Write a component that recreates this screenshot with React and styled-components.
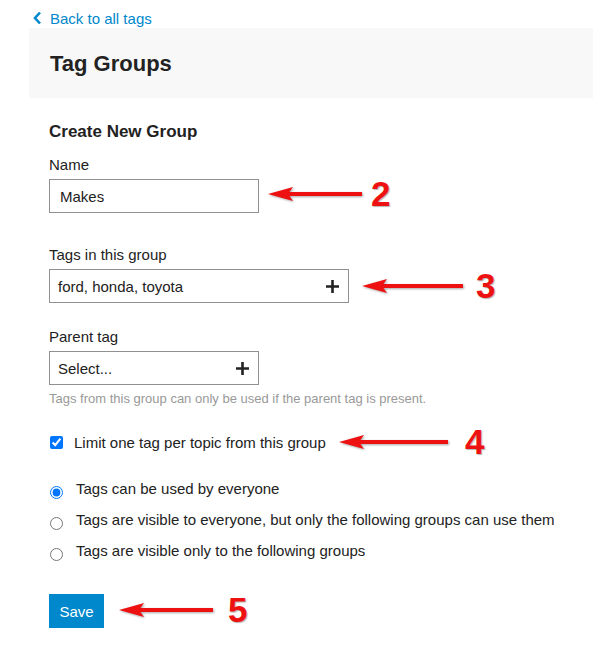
import React, { useState } from "react";
import styled, { createGlobalStyle } from "styled-components";

const GlobalStyle = createGlobalStyle`
  body {
    margin: 0;
    font-family: "Liberation Sans", Arial, sans-serif;
    color: #222;
    background: #fff;
  }
`;

const Page = styled.div`
  position: relative;
  width: 593px;
  height: 646px;
  overflow: hidden;
  padding-left: 29px;
  box-sizing: border-box;
`;

const BackLink = styled.a`
  display: flex;
  align-items: center;
  gap: 8px;
  height: 20px;
  margin: 8px 0 0 4px;
  font-size: 15px;
  color: #0088cc;
  text-decoration: none;
  cursor: pointer;
`;

const Header = styled.div`
  display: flex;
  align-items: center;
  height: 70px;
  padding-left: 21px;
  background: #f8f8f8;
`;

const Title = styled.h1`
  margin: 2px 0 0;
  font-size: 22px;
  font-weight: bold;
  color: #222;
`;

const Form = styled.form`
  display: flex;
  flex-direction: column;
  padding-left: 20px;
`;

const SectionTitle = styled.h2`
  margin: 24px 0 13px;
  font-size: 17px;
  line-height: 20px;
  font-weight: bold;
`;

const Field = styled.div`
  display: flex;
  flex-direction: column;
  align-items: flex-start;
  margin-bottom: ${(p) => p.$gap || 0}px;
`;

const Label = styled.label`
  font-size: 15px;
  line-height: 20px;
  margin-bottom: 4px;
`;

const Box = styled.div`
  display: flex;
  align-items: center;
  justify-content: space-between;
  box-sizing: border-box;
  width: ${(p) => p.$width}px;
  height: 34px;
  padding: 0 9px 0 ${(p) => p.$pad || 8}px;
  border: 1px solid #919191;
  background: #fff;
  font-size: 15px;
`;

const TextInput = styled.input`
  box-sizing: border-box;
  width: ${(p) => p.$width}px;
  height: 34px;
  padding: 0 10px;
  border: 1px solid #919191;
  font: 15px "Liberation Sans", Arial, sans-serif;
  color: #222;
  outline: none;
`;

const Help = styled.div`
  margin-top: 6px;
  font-size: 13px;
  line-height: 16px;
  color: #999;
`;

const CheckRow = styled.label`
  display: flex;
  align-items: center;
  height: 20px;
  margin: 25px 0 27px;
  font-size: 15px;

  input {
    width: 13px;
    height: 13px;
    margin: 0 11px 0 1px;
    accent-color: #0075ff;
  }
`;

const RadioGroup = styled.div`
  display: flex;
  flex-direction: column;
  gap: 10px;
`;

const RadioRow = styled.label`
  display: flex;
  align-items: flex-start;
  height: 21px;
  font-size: 15px;
  line-height: 20px;

  input {
    width: 13px;
    height: 13px;
    margin: 7px 13px 0 1px;
    accent-color: #0075ff;
  }
`;

const SaveButton = styled.button`
  align-self: flex-start;
  margin-top: 32px;
  width: 55px;
  height: 34px;
  border: none;
  background: #0088cc;
  color: #fff;
  font: 15px "Liberation Sans", Arial, sans-serif;
  cursor: pointer;
`;

const Callout = styled.div`
  position: absolute;
  top: ${(p) => p.$y - 16}px;
  left: ${(p) => p.$x}px;
  display: flex;
  align-items: center;
  height: 32px;
  pointer-events: none;
`;

const CalloutNumber = styled.span`
  margin-left: ${(p) => p.$gap}px;
  font-size: 35px;
  font-weight: bold;
  line-height: 32px;
  color: #ee1111;
  text-shadow: 1px 1px 1px rgba(0, 0, 0, 0.3);
`;

const Plus = () => (
  <svg width="13" height="13" viewBox="0 0 13 13">
    <path d="M6.5 0v13M0 6.5h13" stroke="#222" strokeWidth="2.6" />
  </svg>
);

const Chevron = () => (
  <svg width="9" height="14" viewBox="0 0 9 14">
    <path d="M7 1.5L2 7l5 5.5" fill="none" stroke="#0088cc" strokeWidth="2.6" />
  </svg>
);

const Arrow = ({ length }) => (
  <svg
    width={length}
    height="18"
    viewBox={`0 0 ${length} 18`}
    style={{ filter: "drop-shadow(1px 1px 1px rgba(0,0,0,0.35))" }}
  >
    <path d={`M20 7h${length - 20}v4H20z`} fill="#ee1111" />
    <path d="M0 9L25 2L20 9L25 16Z" fill="#ee1111" />
  </svg>
);

const Annotation = ({ x, y, length, gap, n }) => (
  <Callout $x={x} $y={y}>
    <Arrow length={length} />
    <CalloutNumber $gap={gap}>{n}</CalloutNumber>
  </Callout>
);

const visibility = [
  "Tags can be used by everyone",
  "Tags are visible to everyone, but only the following groups can use them",
  "Tags are visible only to the following groups",
];

export default function App() {
  const [name, setName] = useState("Makes");
  const [limit, setLimit] = useState(true);
  const [mode, setMode] = useState(0);

  return (
    <Page>
      <GlobalStyle />
      <BackLink>
        <Chevron />
        Back to all tags
      </BackLink>
      <Header>
        <Title>Tag Groups</Title>
      </Header>

      <Form onSubmit={(e) => e.preventDefault()}>
        <SectionTitle>Create New Group</SectionTitle>

        <Field $gap={32}>
          <Label>Name</Label>
          <TextInput $width={210} value={name} onChange={(e) => setName(e.target.value)} />
        </Field>

        <Field $gap={24}>
          <Label>Tags in this group</Label>
          <Box $width={300}>
            ford, honda, toyota
            <Plus />
          </Box>
        </Field>

        <Field>
          <Label>Parent tag</Label>
          <Box $width={210}>
            Select...
            <Plus />
          </Box>
          <Help>Tags from this group can only be used if the parent tag is present.</Help>
        </Field>

        <CheckRow>
          <input type="checkbox" checked={limit} onChange={() => setLimit(!limit)} />
          Limit one tag per topic from this group
        </CheckRow>

        <RadioGroup>
          {visibility.map((text, i) => (
            <RadioRow key={i}>
              <input type="radio" name="visibility" checked={mode === i} onChange={() => setMode(i)} />
              {text}
            </RadioRow>
          ))}
        </RadioGroup>

        <SaveButton type="submit">Save</SaveButton>
      </Form>

      <Annotation x={268} y={194} length={94} gap={9} n="2" />
      <Annotation x={362} y={286} length={101} gap={13} n="3" />
      <Annotation x={339} y={442} length={109} gap={17} n="4" />
      <Annotation x={119} y={610} length={94} gap={15} n="5" />
    </Page>
  );
}
